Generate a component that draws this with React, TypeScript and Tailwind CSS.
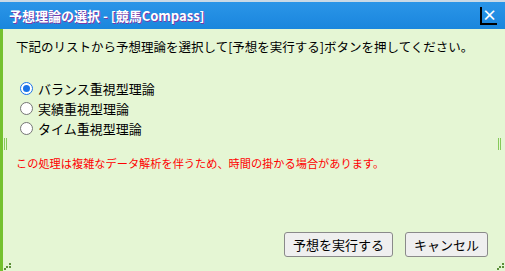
import React, { useState } from "react";

const jp = { fontFamily: '"Noto Sans CJK JP", "Noto Sans", sans-serif' };

const theories = ["バランス重視型理論", "実績重視型理論", "タイム重視型理論"];

function Radio({ checked }: { checked: boolean }) {
  return (
    <span
      className={
        "flex h-[13px] w-[13px] items-center justify-center rounded-full border bg-white " +
        (checked ? "border-[#1a73e8]" : "border-[#767676]")
      }
    >
      {checked && <span className="h-[7px] w-[7px] rounded-full bg-[#1a73e8]" />}
    </span>
  );
}

function Grip() {
  return (
    <svg width="7" height="7" viewBox="0 0 7 7">
      <rect x="5" y="0" width="2" height="2" fill="#5c8f3a" />
      <rect x="2" y="3" width="2" height="2" fill="#5c8f3a" />
      <rect x="5" y="3" width="2" height="2" fill="#5c8f3a" />
      <rect x="0" y="5" width="2" height="2" fill="#5c8f3a" />
    </svg>
  );
}

export default function App() {
  const [selected, setSelected] = useState(0);

  return (
    <div className="flex h-[271px] w-[505px] flex-col overflow-hidden bg-[#e5f6d4]" style={jp}>
      <div className="h-[2px] bg-[#c9d9e6]" />
      <div className="flex h-[27px] items-center justify-between bg-gradient-to-b from-[#2a95e8] to-[#1a86dd] pl-[9px] pr-[8px]">
        <span className="text-[13px] font-bold text-white [text-shadow:1px_1px_0_#7a3aa8]">
          予想理論の選択 - [競馬Compass]
        </span>
        <span className="flex h-[18px] w-[17px] items-center justify-center border-b-2 border-l-2 border-black text-[15px] font-bold leading-none text-white">
          ×
        </span>
      </div>

      <div className="relative flex flex-1 flex-col border-l-[3px] border-[#74c12e] pl-[13px] pt-[10px]">
        <p className="text-[12.5px] leading-[16px] text-black">
          下記のリストから予想理論を選択して[予想を実行する]ボタンを押してください。
        </p>

        <div className="mt-[23px] flex flex-col">
          {theories.map((t, i) => (
            <label
              key={t}
              className="flex h-[20px] cursor-default items-center gap-[5px] pl-[4px]"
              onClick={() => setSelected(i)}
            >
              <Radio checked={selected === i} />
              <span className="text-[13px] leading-none text-black">{t}</span>
            </label>
          ))}
        </div>

        <p className="mt-[18px] text-[11.2px] leading-[14px] text-[#ff0000]">
          この処理は複雑なデータ解析を伴うため、時間の掛かる場合があります。
        </p>

        <div className="mt-auto mb-[14px] flex justify-end gap-[12px] pr-[17px]">
          <button className="h-[25px] w-[109px] rounded-[3px] border border-[#8a8a8a] bg-[#efefef] text-[13px] text-black">
            予想を実行する
          </button>
          <button className="h-[25px] w-[83px] rounded-[3px] border border-[#8a8a8a] bg-[#efefef] text-[13px] text-black">
            キャンセル
          </button>
        </div>

        <div className="absolute left-[1px] top-[109px] flex gap-[1px]">
          <span className="h-[12px] w-[1px] bg-[#86c95a]" />
          <span className="h-[12px] w-[1px] bg-[#86c95a]" />
        </div>
        <div className="absolute right-[4px] top-[109px] flex gap-[1px]">
          <span className="h-[12px] w-[1px] bg-[#86c95a]" />
          <span className="h-[12px] w-[1px] bg-[#86c95a]" />
        </div>
        <div className="absolute bottom-[1px] left-[1px]">
          <Grip />
        </div>
        <div className="absolute bottom-[1px] right-[1px]">
          <Grip />
        </div>
      </div>
    </div>
  );
}
